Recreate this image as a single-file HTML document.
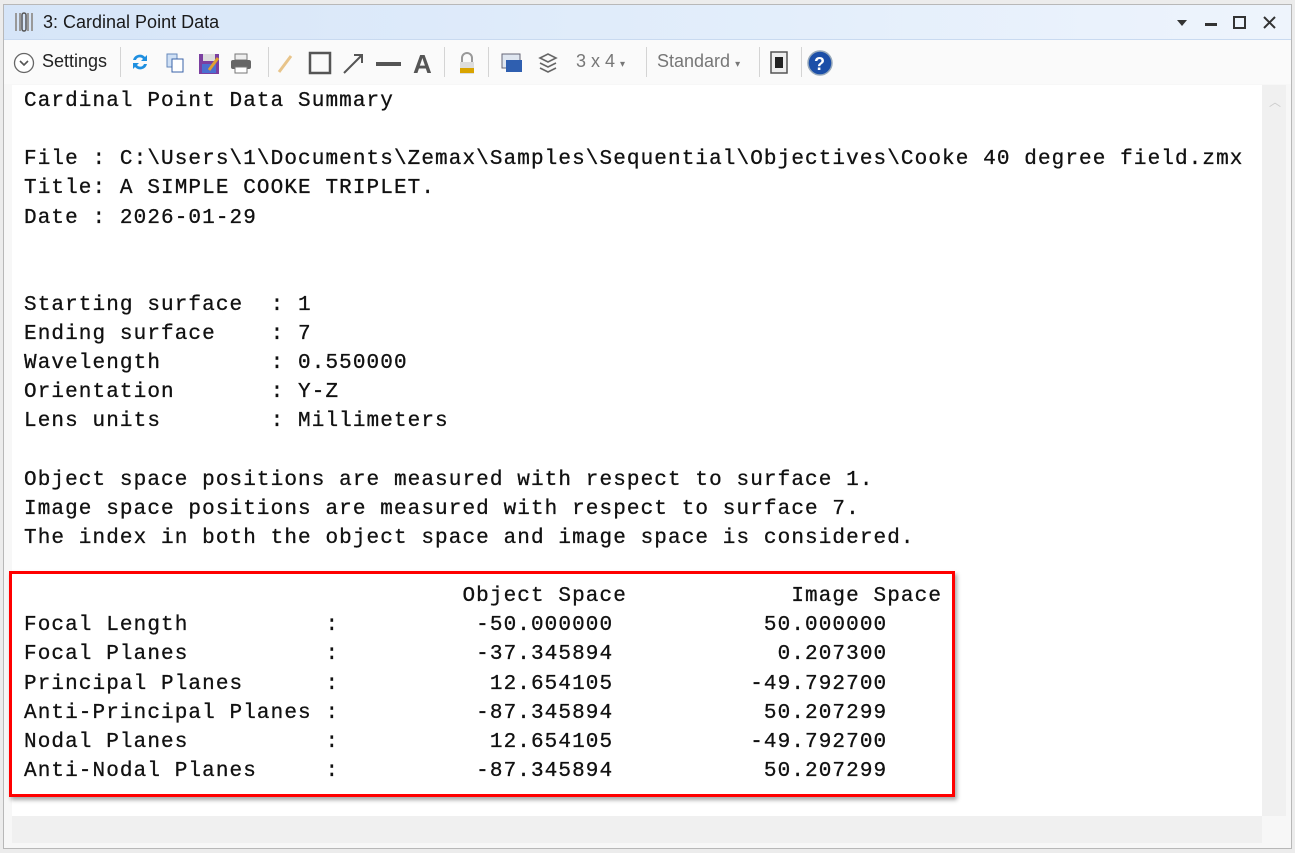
<!DOCTYPE html>
<html><head><meta charset="utf-8"><style>
body{margin:0;width:1295px;height:853px;background:#ececec;overflow:hidden;font-family:"Liberation Sans",sans-serif;position:relative}
.win{position:absolute;left:3px;top:4px;width:1287px;height:843px;border:1px solid #b8b8b8;background:#f7f7f7}
.title{position:absolute;left:0;top:0;width:1287px;height:34px;background:linear-gradient(90deg,#d6e5f8,#e3eefb 60%,#eef4fc);border-bottom:1px solid #c9daf0}
.title span{position:absolute;left:39px;top:7px;font-size:18px;color:#1a1a1a}
.tb{position:absolute;left:0;top:35px;width:1287px;height:44px;background:#fafafa}
.tb .t{position:absolute;top:11px;font-size:18px;color:#222}
.sep{position:absolute;top:7px;width:1px;height:30px;background:#d4d4d4}
.content{position:absolute;left:8px;top:80px;width:1250px;height:731px;background:#fff}
pre{position:absolute;left:24px;top:87px;margin:0;font-family:"Liberation Mono",monospace;font-size:21px;letter-spacing:1.1px;line-height:29.12px;color:#111;-webkit-text-stroke:0.3px #111}
.vs{position:absolute;left:1258px;top:80px;width:24px;height:731px;background:#f0f0f0}
.hs{position:absolute;left:8px;top:811px;width:1250px;height:27px;background:#f0f0f0}
.red{position:absolute;left:9px;top:571px;width:940px;height:220px;border:3px solid #f00;box-shadow:2px 3px 4px rgba(0,0,0,.35)}
</style></head><body>
<div class="win">
<div class="title">
<svg style="position:absolute;left:10px;top:6px" width="20" height="22"><g fill="#999"><rect x="1" y="2" width="2" height="18"/><rect x="5" y="2" width="2" height="18"/><rect x="13" y="2" width="2" height="18"/><rect x="17" y="2" width="2" height="18"/></g><rect x="8" y="2" width="4" height="18" rx="2" fill="none" stroke="#555" stroke-width="1.5"/></svg>
<span>3: Cardinal Point Data</span>
<svg style="position:absolute;left:1170px;top:10px" width="110" height="16"><path d="M3 5h10l-5 6z" fill="#333"/><rect x="31" y="8" width="12" height="3" fill="#333"/><rect x="60" y="2" width="11" height="11" fill="none" stroke="#333" stroke-width="2"/><path d="M90 2l11 11M101 2l-11 11" stroke="#333" stroke-width="2"/></svg>
</div>
<div class="tb">
<svg style="position:absolute;left:9px;top:12px" width="22" height="22"><circle cx="11" cy="11" r="9.5" fill="#fff" stroke="#666" stroke-width="1.3"/><path d="M7 9l4 4 4-4" fill="none" stroke="#555" stroke-width="1.6"/></svg>
<div class="t" style="left:38px">Settings</div>
<div class="sep" style="left:116px"></div>
<svg style="position:absolute;left:125px;top:10px" width="130" height="26"><path d="M4 10a7 7 0 0 1 12-3l2-2v6h-6l2-2a4 4 0 0 0-7 1z" fill="#1e8fe0"/><path d="M18 14a7 7 0 0 1-12 3l-2 2v-6h6l-2 2a4 4 0 0 0 7-1z" fill="#1e8fe0"/><rect x="38" y="4" width="10" height="13" fill="#cfe0f5" stroke="#6688bb"/><rect x="43" y="9" width="11" height="13" fill="#fff" stroke="#3a63a8"/><rect x="70" y="4" width="20" height="20" fill="#7b3fa0"/><rect x="74" y="4" width="12" height="7" fill="#ddd"/><rect x="73" y="14" width="14" height="9" fill="#4b6fd0"/><path d="M80 20l9-12" stroke="#e0a030" stroke-width="3"/><rect x="106" y="4" width="12" height="6" fill="#eee" stroke="#777"/><rect x="102" y="10" width="20" height="9" rx="2" fill="#666"/><rect x="106" y="17" width="12" height="6" fill="#fff" stroke="#777"/></svg>
<div class="sep" style="left:264px"></div>
<svg style="position:absolute;left:272px;top:10px" width="160" height="26"><path d="M3 22l12-16" stroke="#e8c48a" stroke-width="3"/><rect x="34" y="3" width="20" height="20" fill="none" stroke="#555" stroke-width="2.5"/><path d="M68 23l18-18M78 5h8v8" fill="none" stroke="#555" stroke-width="2"/><rect x="100" y="12" width="25" height="4" fill="#555"/><text x="137" y="23" font-family="Liberation Sans" font-weight="bold" font-size="26" fill="#555">A</text></svg>
<div class="sep" style="left:440px"></div>
<svg style="position:absolute;left:448px;top:10px" width="30" height="26"><path d="M10 12v-4a5 5 0 0 1 10 0v4" fill="none" stroke="#999" stroke-width="2"/><rect x="8" y="12" width="14" height="12" fill="#ddd"/><rect x="8" y="18" width="14" height="5" fill="#d9a400"/></svg>
<div class="sep" style="left:484px"></div>
<svg style="position:absolute;left:494px;top:10px" width="70" height="26"><rect x="4" y="4" width="18" height="14" fill="#dfe6f0" stroke="#667"/><rect x="8" y="10" width="16" height="12" fill="#2f5fb0"/><path d="M42 8l8-4 8 4-8 4zM42 13l8 4 8-4M42 18l8 4 8-4" fill="none" stroke="#666" stroke-width="1.6"/></svg>
<div class="t" style="left:572px;color:#777">3 x 4 <span style="font-size:10px">▾</span></div>
<div class="sep" style="left:642px"></div>
<div class="t" style="left:653px;color:#777">Standard <span style="font-size:10px">▾</span></div>
<div class="sep" style="left:755px"></div>
<svg style="position:absolute;left:764px;top:9px" width="70" height="28"><rect x="3" y="3" width="16" height="21" fill="#eee" stroke="#555" stroke-width="1.5"/><rect x="7" y="8" width="8" height="11" fill="#222"/><circle cx="52" cy="14" r="12" fill="#1c4fa8" stroke="#9ab" stroke-width="1.5"/><text x="46" y="21" font-family="Liberation Sans" font-weight="bold" font-size="18" fill="#fff">?</text></svg>
<div class="sep" style="left:797px"></div>
</div>
<div class="content"></div>
<div class="vs"><div style="position:absolute;left:7px;top:8px;color:#ccc;font-size:12px">︿</div></div>
<div class="hs"></div>
</div>
<pre>Cardinal Point Data Summary

File : C:\Users\1\Documents\Zemax\Samples\Sequential\Objectives\Cooke 40 degree field.zmx
Title: A SIMPLE COOKE TRIPLET.
Date : 2026-01-29


Starting surface  : 1
Ending surface    : 7
Wavelength        : 0.550000
Orientation       : Y-Z
Lens units        : Millimeters

Object space positions are measured with respect to surface 1.
Image space positions are measured with respect to surface 7.
The index in both the object space and image space is considered.

                                Object Space            Image Space
Focal Length          :          -50.000000           50.000000
Focal Planes          :          -37.345894            0.207300
Principal Planes      :           12.654105          -49.792700
Anti-Principal Planes :          -87.345894           50.207299
Nodal Planes          :           12.654105          -49.792700
Anti-Nodal Planes     :          -87.345894           50.207299</pre>
<div class="red"></div>
</body></html>
